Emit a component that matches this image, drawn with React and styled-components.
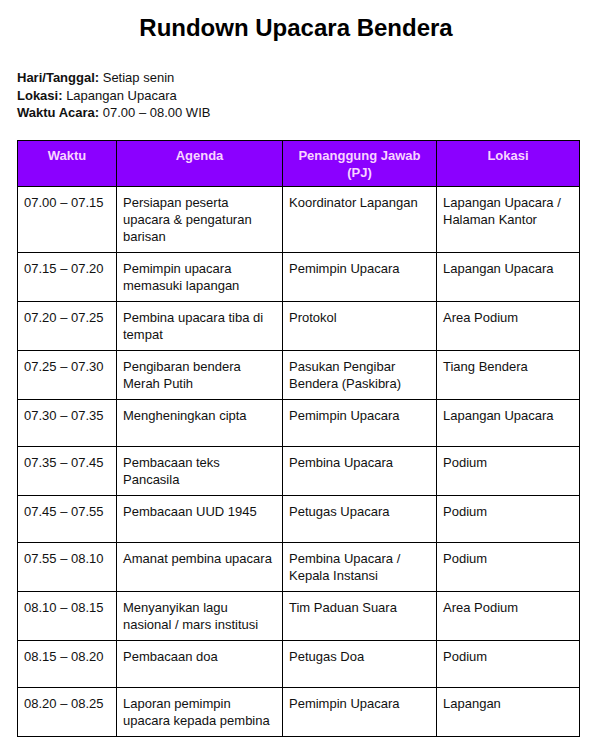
import React from 'react';
import styled, { createGlobalStyle } from 'styled-components';

const GlobalStyle = createGlobalStyle`
  body {
    margin: 0;
    background: #ffffff;
    font-family: 'Liberation Sans', Arial, sans-serif;
    color: #111111;
  }
`;

const Page = styled.div`
  padding: 14px 17px 10px 17px;
  font-size: 13px;
  line-height: 17.5px;
`;

const Title = styled.h1`
  margin: 0;
  text-align: center;
  font-size: 24px;
  line-height: 28px;
  font-weight: 700;
  color: #000000;
`;

const Info = styled.div`
  margin-top: 27px;
  .label {
    font-weight: 700;
  }
`;

const Table = styled.table`
  margin-top: 18px;
  width: 562px;
  border-collapse: collapse;
  table-layout: fixed;
  line-height: 17px;
`;

const HeadCell = styled.th`
  width: ${(props) => props.w}px;
  background-color: #8b00ff;
  color: #f8d4ff;
  font-weight: 700;
  text-align: center;
  vertical-align: top;
  border: 1px solid #000000;
  padding: 6px 7px 5px 7px;
  height: 44px;
  box-sizing: border-box;
`;

const Cell = styled.td`
  border: 1px solid #000000;
  vertical-align: top;
  padding: 7px 6px 7px 6px;
  height: 47px;
  box-sizing: border-box;
`;

const columns = [
  { title: 'Waktu', w: 99 },
  { title: 'Agenda', w: 166 },
  { title: 'Penanggung Jawab (PJ)', w: 154 },
  { title: 'Lokasi', w: 143 },
];

const rows = [
  ['07.00 – 07.15', 'Persiapan peserta upacara & pengaturan barisan', 'Koordinator Lapangan', 'Lapangan Upacara / Halaman Kantor'],
  ['07.15 – 07.20', 'Pemimpin upacara memasuki lapangan', 'Pemimpin Upacara', 'Lapangan Upacara'],
  ['07.20 – 07.25', 'Pembina upacara tiba di tempat', 'Protokol', 'Area Podium'],
  ['07.25 – 07.30', 'Pengibaran bendera Merah Putih', 'Pasukan Pengibar Bendera (Paskibra)', 'Tiang Bendera'],
  ['07.30 – 07.35', 'Mengheningkan cipta', 'Pemimpin Upacara', 'Lapangan Upacara'],
  ['07.35 – 07.45', 'Pembacaan teks Pancasila', 'Pembina Upacara', 'Podium'],
  ['07.45 – 07.55', 'Pembacaan UUD 1945', 'Petugas Upacara', 'Podium'],
  ['07.55 – 08.10', 'Amanat pembina upacara', 'Pembina Upacara / Kepala Instansi', 'Podium'],
  ['08.10 – 08.15', 'Menyanyikan lagu nasional / mars institusi', 'Tim Paduan Suara', 'Area Podium'],
  ['08.15 – 08.20', 'Pembacaan doa', 'Petugas Doa', 'Podium'],
  ['08.20 – 08.25', 'Laporan pemimpin upacara kepada pembina', 'Pemimpin Upacara', 'Lapangan'],
];

const App = () => {
  return (
    <Page>
      <GlobalStyle />
      <Title>Rundown Upacara Bendera</Title>
      <Info>
        <div><span className='label'>Hari/Tanggal:</span> Setiap senin</div>
        <div><span className='label'>Lokasi:</span> Lapangan Upacara</div>
        <div><span className='label'>Waktu Acara:</span> 07.00 – 08.00 WIB</div>
      </Info>
      <Table>
        <thead>
          <tr>
            {columns.map((col) => (
              <HeadCell key={col.title} w={col.w}>
                {col.title}
              </HeadCell>
            ))}
          </tr>
        </thead>
        <tbody>
          {rows.map((row) => (
            <tr key={row[0]}>
              {row.map((text, i) => (
                <Cell key={i}>{text}</Cell>
              ))}
            </tr>
          ))}
        </tbody>
      </Table>
    </Page>
  );
};

export default App;
